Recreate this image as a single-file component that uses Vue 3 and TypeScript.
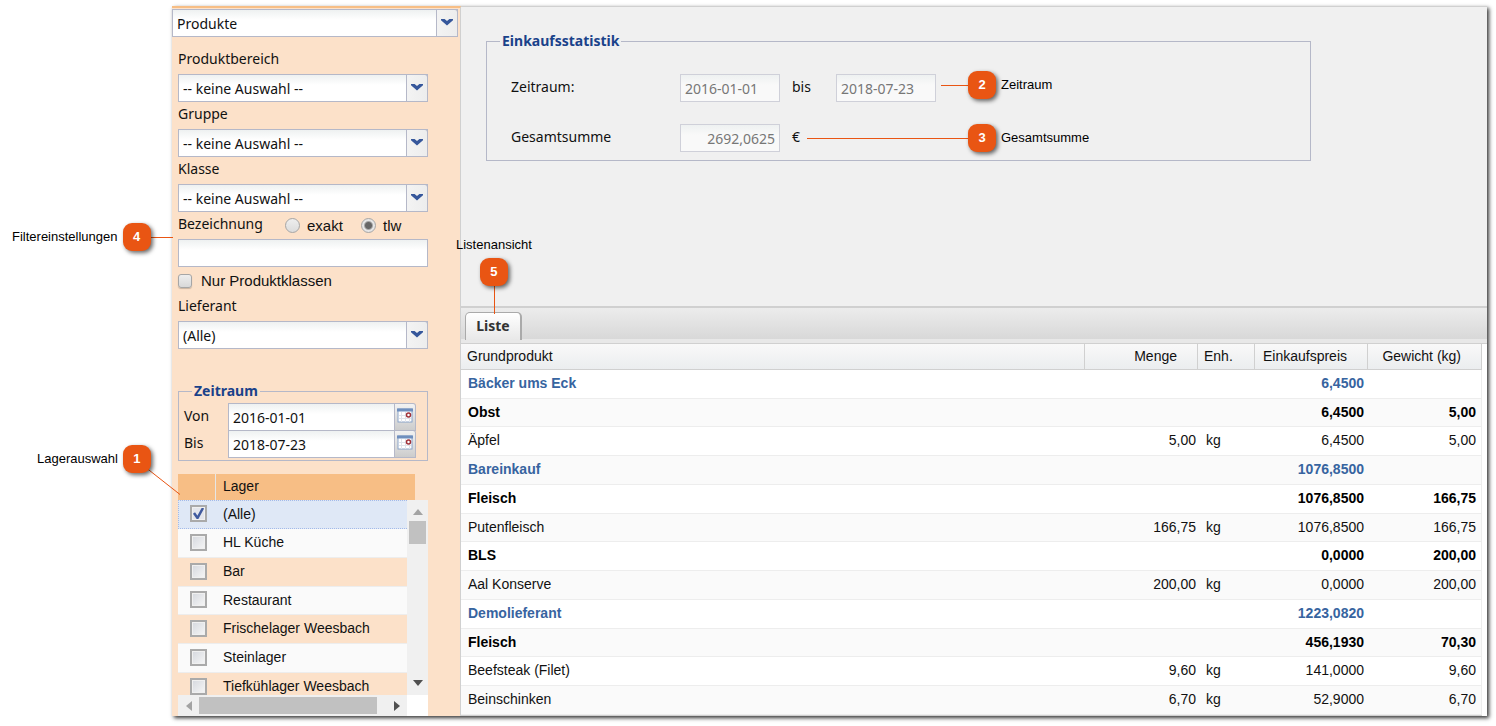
<script setup lang="ts">
import { ref } from 'vue'

interface Row {
  kind: 'supplier' | 'group' | 'item'
  name: string
  amount?: string
  unit?: string
  price: string
  weight?: string
}

const module = ref('Produkte')
const filters = ref([
  { id: 'area', label: 'Produktbereich', value: '-- keine Auswahl --' },
  { id: 'group', label: 'Gruppe', value: '-- keine Auswahl --' },
  { id: 'class', label: 'Klasse', value: '-- keine Auswahl --' },
])
const matchMode = ref('tlw')
const term = ref('')
const classesOnly = ref(false)
const supplier = ref('(Alle)')
const from = ref('2016-01-01')
const to = ref('2018-07-23')

const stores = ref([
  { name: '(Alle)', checked: true },
  { name: 'HL Küche', checked: false },
  { name: 'Bar', checked: false },
  { name: 'Restaurant', checked: false },
  { name: 'Frischelager Weesbach', checked: false },
  { name: 'Steinlager', checked: false },
  { name: 'Tiefkühlager Weesbach', checked: false },
])

const rows: Row[] = [
  { kind: 'supplier', name: 'Bäcker ums Eck', price: '6,4500' },
  { kind: 'group', name: 'Obst', price: '6,4500', weight: '5,00' },
  { kind: 'item', name: 'Äpfel', amount: '5,00', unit: 'kg', price: '6,4500', weight: '5,00' },
  { kind: 'supplier', name: 'Bareinkauf', price: '1076,8500' },
  { kind: 'group', name: 'Fleisch', price: '1076,8500', weight: '166,75' },
  { kind: 'item', name: 'Putenfleisch', amount: '166,75', unit: 'kg', price: '1076,8500', weight: '166,75' },
  { kind: 'group', name: 'BLS', price: '0,0000', weight: '200,00' },
  { kind: 'item', name: 'Aal Konserve', amount: '200,00', unit: 'kg', price: '0,0000', weight: '200,00' },
  { kind: 'supplier', name: 'Demolieferant', price: '1223,0820' },
  { kind: 'group', name: 'Fleisch', price: '456,1930', weight: '70,30' },
  { kind: 'item', name: 'Beefsteak (Filet)', amount: '9,60', unit: 'kg', price: '141,0000', weight: '9,60' },
  { kind: 'item', name: 'Beinschinken', amount: '6,70', unit: 'kg', price: '52,9000', weight: '6,70' },
]
</script>

<template>
  <div class="page">
    <div class="window">
      <aside class="sidebar">
        <div class="combo module">
          <select v-model="module" aria-label="Modul">
            <option>Produkte</option>
          </select>
          <span class="trigger"><svg viewBox="0 0 12 8"><path d="M0 1h3.600L6 3 8.400 1H12v1.200L6 7.400 0 2.200z" /></svg></span>
        </div>

        <form class="filters" @submit.prevent>
          <template v-for="f in filters" :key="f.id">
            <label class="caption" :for="f.id">{{ f.label }}</label>
            <div class="combo">
              <select :id="f.id" v-model="f.value">
                <option>-- keine Auswahl --</option>
              </select>
              <span class="trigger"><svg viewBox="0 0 12 8"><path d="M0 1h3.600L6 3 8.400 1H12v1.200L6 7.400 0 2.200z" /></svg></span>
            </div>
          </template>

          <div class="term-row">
            <label class="caption" for="term">Bezeichnung</label>
            <label class="choice"><input v-model="matchMode" type="radio" name="mode" value="exakt" />exakt</label>
            <label class="choice"><input v-model="matchMode" type="radio" name="mode" value="tlw" />tlw</label>
          </div>
          <input id="term" v-model="term" class="text" type="text" />

          <label class="only"><input v-model="classesOnly" type="checkbox" />Nur Produktklassen</label>

          <label class="caption" for="supplier">Lieferant</label>
          <div class="combo">
            <select id="supplier" v-model="supplier">
              <option>(Alle)</option>
            </select>
            <span class="trigger"><svg viewBox="0 0 12 8"><path d="M0 1h3.600L6 3 8.400 1H12v1.200L6 7.400 0 2.200z" /></svg></span>
          </div>

          <fieldset class="period">
            <legend>Zeitraum</legend>
            <div class="date-row">
              <label for="from">Von</label>
              <input id="from" v-model="from" class="text" type="text" />
              <button type="button" aria-label="Kalender Von">
                <svg viewBox="0 0 16 15"><rect x="1" y="1" width="14" height="13" fill="#fff" stroke="#8aa3c8" /><path d="M0 2h16" stroke="#6f8fbe" stroke-width="3" /><path d="M4.500 4v10M8.500 4v10M12.500 4v10M2 7.500h12M2 10.500h12" stroke="#dfe3ea" /><circle cx="11.500" cy="7" r="2" fill="#fff" stroke="#a03038" stroke-width="1.500" /></svg>
              </button>
            </div>
            <div class="date-row">
              <label for="to">Bis</label>
              <input id="to" v-model="to" class="text" type="text" />
              <button type="button" aria-label="Kalender Bis">
                <svg viewBox="0 0 16 15"><rect x="1" y="1" width="14" height="13" fill="#fff" stroke="#8aa3c8" /><path d="M0 2h16" stroke="#6f8fbe" stroke-width="3" /><path d="M4.500 4v10M8.500 4v10M12.500 4v10M2 7.500h12M2 10.500h12" stroke="#dfe3ea" /><circle cx="11.500" cy="7" r="2" fill="#fff" stroke="#a03038" stroke-width="1.500" /></svg>
              </button>
            </div>
          </fieldset>

          <div class="stores">
            <div class="stores-head"><span></span><span>Lager</span></div>
            <div class="stores-view">
              <div class="stores-list">
                <label v-for="s in stores" :key="s.name" class="store" :class="{ selected: s.checked }">
                  <input v-model="s.checked" type="checkbox" />{{ s.name }}
                </label>
              </div>
              <div class="vbar" aria-hidden="true">
                <svg viewBox="0 0 10 6"><path d="M5 0l5 6H0z" fill="#a3a3a3" /></svg>
                <i></i>
                <svg viewBox="0 0 10 6"><path d="M0 0h10L5 6z" fill="#505050" /></svg>
              </div>
            </div>
            <div class="hbar" aria-hidden="true">
              <svg viewBox="0 0 6 10"><path d="M6 0v10L0 5z" fill="#a3a3a3" /></svg>
              <i></i>
              <svg viewBox="0 0 6 10"><path d="M0 0l6 5-6 5z" fill="#505050" /></svg>
            </div>
          </div>
        </form>
      </aside>

      <main class="main">
        <section class="stats">
          <fieldset>
            <legend>Einkaufsstatistik</legend>
            <div class="stat-row">
              <label for="stat-from">Zeitraum:</label>
              <input id="stat-from" type="text" value="2016-01-01" disabled />
              <label for="stat-to">bis</label>
              <input id="stat-to" type="text" value="2018-07-23" disabled />
            </div>
            <div class="stat-row">
              <label for="stat-sum">Gesamtsumme</label>
              <input id="stat-sum" class="sum" type="text" value="2692,0625" disabled />
              <span>€</span>
            </div>
          </fieldset>
        </section>

        <div class="tabs" role="tablist">
          <button type="button" role="tab" aria-selected="true">Liste</button>
        </div>

        <div class="grid">
          <table>
            <colgroup>
              <col />
              <col class="c-amount" />
              <col class="c-unit" />
              <col class="c-price" />
              <col class="c-weight" />
            </colgroup>
            <thead>
              <tr>
                <th>Grundprodukt</th>
                <th class="num">Menge</th>
                <th>Enh.</th>
                <th class="num">Einkaufspreis</th>
                <th class="num">Gewicht (kg)</th>
              </tr>
            </thead>
            <tbody>
              <tr v-for="(r, i) in rows" :key="i" :class="r.kind">
                <td>{{ r.name }}</td>
                <td class="amount">{{ r.amount }}</td>
                <td class="unit">{{ r.unit }}</td>
                <td class="price">{{ r.price }}</td>
                <td class="weight">{{ r.weight }}</td>
              </tr>
            </tbody>
          </table>
        </div>
      </main>
    </div>

    <div class="callouts">
      <svg class="lines" width="1000" height="520" viewBox="0 0 1000 520">
        <path d="M147 468.500L180 494.500M150 237.500H173M941 85.500H970M807 138.500H970M494.500 284V314" />
      </svg>
      <div class="callout c1"><span>Lagerauswahl</span><b>1</b></div>
      <div class="callout c2"><b>2</b><span>Zeitraum</span></div>
      <div class="callout c3"><b>3</b><span>Gesamtsumme</span></div>
      <div class="callout c4"><span>Filtereinstellungen</span><b>4</b></div>
      <div class="callout c5"><span>Listenansicht</span><b>5</b></div>
    </div>
  </div>
</template>

<style>
body {
  margin: 0;
  background: #fff;
}
</style>

<style scoped>
* {
  box-sizing: border-box;
}
.page {
  position: relative;
  padding: 6px 9px 10px 172px;
  font: 14px/20px "Noto Sans", "Open Sans", sans-serif;
  color: #111;
}
input,
select,
button {
  font: inherit;
  color: inherit;
  margin: 0;
  border-radius: 0;
  outline: none;
}
.window {
  display: grid;
  grid-template-columns: 289px minmax(0, 1fr);
  box-shadow: 2px 2px 4px rgba(0, 0, 0, 0.8);
  background: #fff;
}

/* Sidebar */
.sidebar {
  background: #fce1c9;
  border-top: 2px solid #f7be85;
  border-right: 1px solid #d0d0d0;
}
.combo {
  position: relative;
  height: 28px;
}
.combo select {
  appearance: none;
  display: block;
  width: 100%;
  height: 100%;
  padding: 2px 24px 0 4px;
  border: 1px solid #b5b8c8;
  background: linear-gradient(#eef1f1, #fff 10px);
}
.trigger {
  position: absolute;
  top: 0;
  right: 0;
  display: flex;
  justify-content: center;
  width: 22px;
  height: 28px;
  padding-top: 8px;
  border: 1px solid #b5b8c8;
  border-radius: 0 3px 0 0;
  background: linear-gradient(90deg, #f3f3f3, #ededed);
  pointer-events: none;
}
.trigger svg {
  width: 12px;
  height: 8px;
  fill: #36579b;
}
.module {
  width: 286px;
  margin-top: 1px;
}
.filters {
  width: 250px;
  margin: 10px 0 0 6px;
}
.caption {
  display: block;
  height: 27px;
  line-height: 24px;
}
.term-row {
  display: flex;
}
.term-row .caption {
  flex: none;
  width: 107px;
}
.choice,
.only {
  display: flex;
  align-items: center;
  font: 15px/27px "Liberation Sans", Arial, sans-serif;
}
.choice {
  flex: none;
  width: 76px;
}
.choice:last-child {
  width: 67px;
}
.choice input {
  appearance: none;
  width: 15px;
  height: 15px;
  margin-right: 7px;
  border: 1px solid #a6a6a6;
  border-radius: 50%;
  background: linear-gradient(#eee, #dcdcdc);
}
.choice input:checked {
  background: radial-gradient(circle, #666 0 3px, #e5e5e5 5px);
}
.text {
  display: block;
  width: 100%;
  height: 28px;
  padding: 0 4px;
  border: 1px solid #b5b8c8;
  background: linear-gradient(#eef1f1, #fff 10px);
}
.only input {
  appearance: none;
  width: 14px;
  height: 14px;
  margin-right: 9px;
  border: 1px solid #a6a6a6;
  border-radius: 3px;
  background: linear-gradient(#eee, #d8d8d8);
  box-shadow: 0 1px 1px rgba(0, 0, 0, 0.2);
}
fieldset {
  min-width: 0;
  margin: 0;
  border: 1px solid #b5b8c8;
}
legend {
  padding: 0 2px;
  font-weight: 700;
  color: #1a428a;
}
.period {
  margin-top: 32px;
  padding: 2px 11px 2px 5px;
}
.period legend {
  margin-left: 8px;
}
.date-row {
  display: flex;
}
.date-row + .date-row {
  margin-top: -1px;
}
.date-row label {
  width: 44px;
  line-height: 26px;
}
.date-row .text {
  flex: 1;
  min-width: 0;
}
.date-row button {
  display: flex;
  justify-content: center;
  width: 21px;
  height: 28px;
  padding: 4px 0;
  border: 1px solid #b5b8c8;
  border-left: 0;
  border-radius: 0 3px 0 0;
  background: linear-gradient(#f2f2f2, #ccc);
}
.date-row svg {
  display: block;
  flex: none;
  width: 16px;
  height: 15px;
}
.stores {
  margin-top: 13px;
  font: 14px/20px "Liberation Sans", Arial, sans-serif;
}
.stores-head {
  display: flex;
  width: 237px;
  height: 26px;
  line-height: 24px;
  background: #f7be85;
}
.stores-head span:first-child {
  width: 38px;
  border-right: 1px solid #e6e6e6;
}
.stores-head span:last-child {
  padding-left: 7px;
}
.stores-view {
  display: flex;
  height: 195px;
}
.stores-list {
  flex: 1;
  overflow: hidden;
}
.store {
  display: flex;
  align-items: center;
  height: 29px;
  padding: 0 12px 2px;
  border-bottom: 1px solid #ededed;
  background: #fafafa;
}
.store:nth-child(4n) {
  height: 28px;
}
.store:nth-child(odd) {
  background: #fce1c9;
}
.store.selected {
  padding-left: 11px;
  border: 1px dotted #a3bae9;
  border-right: 0;
  background: #dfe8f6;
}
.store input {
  appearance: none;
  width: 17px;
  height: 17px;
  margin-right: 16px;
  border: 2px solid #aaa;
  background: linear-gradient(135deg, #d5d8de, #f6f6f6);
  box-shadow: inset 0 0 0 1px #f0f0f0;
}
.store input:checked {
  background: url("data:image/svg+xml,%3Csvg xmlns='http://www.w3.org/2000/svg' viewBox='0 0 13 13'%3E%3Cpath d='M2 6l3.500 5L11 1' fill='none' stroke='%23405a9e' stroke-width='2.500'/%3E%3C/svg%3E") #e4e6ec;
}
.vbar {
  display: flex;
  flex-direction: column;
  align-items: center;
  width: 21px;
  padding: 9px 0 9px;
  background: #f0f0f0;
}
.vbar svg {
  width: 10px;
  height: 6px;
}
.vbar i {
  width: 17px;
  height: 23px;
  margin: 6px 0 auto;
  background: #c1c1c1;
}
.hbar {
  display: flex;
  align-items: center;
  height: 21px;
  margin-right: 21px;
  padding: 0 7px 0 8px;
  background: #f0f0f0;
  box-shadow: 21px 0 #fff;
}
.hbar svg {
  width: 6px;
  height: 10px;
}
.hbar i {
  width: 178px;
  height: 17px;
  margin: 0 auto 0 7px;
  background: #c1c1c1;
}

/* Main pane */
.main {
  border-top: 1px solid #d0d0d0;
}
.stats {
  height: 301px;
  padding: 24px 176px 0 25px;
  border-bottom: 2px solid #d0d0d0;
  background: #f0f0f0;
}
.stats fieldset {
  padding: 23px 13px 8px;
}
.stat-row {
  display: grid;
  grid-template-columns: 169px 100px 56px 100px;
  padding-left: 11px;
  line-height: 26px;
}
.stat-row + .stat-row {
  margin-top: 22px;
}
.stat-row input {
  height: 28px;
  padding: 0 4px;
  border: 1px solid #cfd0d9;
  background: linear-gradient(#eef1f1, #f9f9f9 10px);
  color: #777;
}
.stat-row input + * {
  padding-left: 12px;
}
.stat-row input.sum {
  text-align: right;
}
.tabs {
  height: 35px;
  padding: 4px 4px 0;
  border-bottom: 4px solid #e8e8e8;
  background: linear-gradient(#ececec, #d8d8d8);
}
.tabs button {
  display: block;
  width: 57px;
  height: 28px;
  padding: 0 0 2px;
  border: 1px solid #aaa;
  border-width: 1px 2px 0 1px;
  border-radius: 5px 5px 0 0;
  background: linear-gradient(#fff, #e8e8e8);
  font-weight: 700;
  color: #333;
}
.grid {
  padding-right: 5px;
  border-top: 1px solid #d0d0d0;
}
table {
  width: 100%;
  table-layout: fixed;
  border-collapse: separate;
  border-spacing: 0;
  border-bottom: 1px solid #d0d0d0;
  font: 14px/20px "Liberation Sans", Arial, sans-serif;
}
.c-amount,
.c-price {
  width: 113px;
}
.c-unit {
  width: 57px;
}
.c-weight {
  width: 114px;
}
th {
  height: 26px;
  padding: 0 6px 2px;
  border: solid #d0d0d0;
  border-width: 0 1px 1px 0;
  background: linear-gradient(#f9f9f9, #ebedef);
  font-weight: 400;
  text-align: left;
}
th.num {
  padding-right: 20px;
  text-align: right;
}
td {
  height: 29px;
  padding: 0 7px 2px;
  border-bottom: 1px solid #ededed;
  white-space: nowrap;
}
tbody tr:nth-child(4n + 2) td {
  height: 28px;
}
tbody tr:nth-child(even) {
  background: #fafafa;
}
.amount,
.price,
.weight {
  text-align: right;
}
.amount {
  padding-right: 2px;
}
.unit {
  padding-left: 8px;
}
.price {
  padding-right: 4px;
}
.weight {
  padding-right: 5px;
  border-right: 1px solid #ededed;
}
.supplier,
.group {
  font-weight: 700;
}
.group {
  color: #000;
}
.supplier {
  color: #3764a0;
}

/* Numbered callouts laid over the window */
.callouts {
  position: absolute;
  inset: 0;
  overflow: hidden;
  pointer-events: none;
  font: 13px/16px "Liberation Sans", Arial, sans-serif;
  color: #000;
}
.lines {
  position: absolute;
  top: 0;
  left: 0;
  fill: none;
  stroke: #e95513;
}
.callout {
  position: absolute;
  display: flex;
  align-items: center;
  gap: 5px;
}
.callout b {
  width: 28px;
  height: 28px;
  border-radius: 9px;
  background: #e95513;
  box-shadow: 2px 2px 4px rgba(0, 0, 0, 0.6);
  color: #fff;
  line-height: 28px;
  text-align: center;
}
.c1 {
  top: 445px;
  left: 37px;
}
.c2 {
  top: 71px;
  left: 968px;
}
.c3 {
  top: 124px;
  left: 968px;
}
.c4 {
  top: 223px;
  left: 12px;
}
.c5 {
  top: 237px;
  left: 456px;
  flex-direction: column;
}
</style>
